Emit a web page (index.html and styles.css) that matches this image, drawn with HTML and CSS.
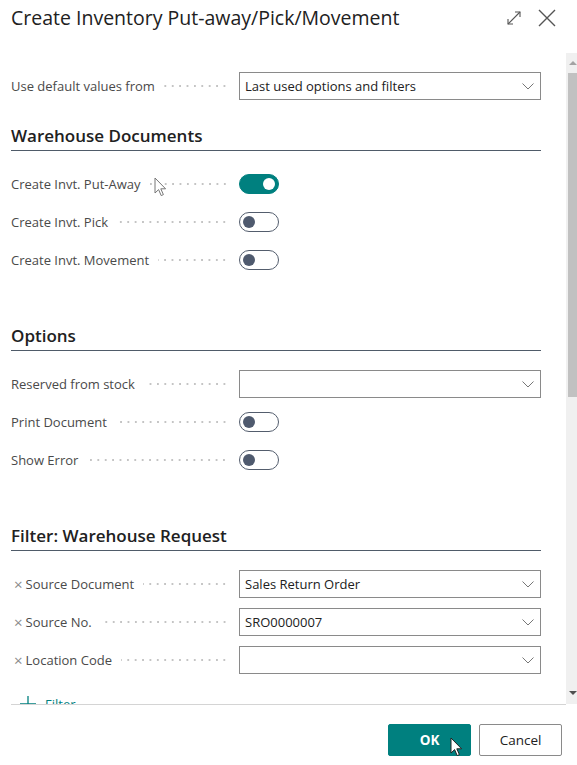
FILE: index.html
```html
<!DOCTYPE html>
<html lang="en">
<head>
    <meta charset="UTF-8">
    <meta name="viewport" content="width=device-width, initial-scale=1.0">
    <title>Create Inventory Put-away/Pick/Movement</title>
    <link rel="stylesheet" href="styles.css">
</head>
<body>
    <div class="dialog">
        <header class="dialog-header">
            <h1 class="dialog-title">Create Inventory Put-away/Pick/Movement</h1>
            <div class="header-actions">
                <button class="icon-btn" aria-label="Expand">
                    <svg width="16" height="16" viewBox="0 0 16 16" fill="none" stroke="#555" stroke-width="1.1">
                        <path d="M2 14 L14 2"/>
                        <path d="M2 9 V14 H7"/>
                        <path d="M9 2 H14 V7"/>
                    </svg>
                </button>
                <button class="icon-btn" aria-label="Close">
                    <svg width="18" height="18" viewBox="0 0 18 18" fill="none" stroke="#555" stroke-width="1.4">
                        <path d="M1 1 L17 17 M17 1 L1 17"/>
                    </svg>
                </button>
            </div>
        </header>

        <div class="dialog-main">
            <div class="dialog-body">
                <div class="field-row">
                    <div class="field-label"><span>Use default values from</span><span class="leader"></span></div>
                    <div class="select"><span>Last used options and filters</span><svg class="chevron" width="12" height="7" viewBox="0 0 12 7"><path d="M0.5 0.5 L6 6 L11.5 0.5" fill="none" stroke="#777" stroke-width="1"/></svg></div>
                </div>

                <section class="group">
                    <h2 class="group-title">Warehouse Documents</h2>
                    <div class="field-row">
                        <div class="field-label"><span>Create Invt. Put-Away</span><span class="leader"></span></div>
                        <div><span class="toggle on"></span></div>
                    </div>
                    <div class="field-row">
                        <div class="field-label"><span>Create Invt. Pick</span><span class="leader"></span></div>
                        <div><span class="toggle"></span></div>
                    </div>
                    <div class="field-row">
                        <div class="field-label"><span>Create Invt. Movement</span><span class="leader"></span></div>
                        <div><span class="toggle"></span></div>
                    </div>
                </section>

                <section class="group">
                    <h2 class="group-title">Options</h2>
                    <div class="field-row">
                        <div class="field-label"><span>Reserved from stock</span><span class="leader"></span></div>
                        <div class="select"><span></span><svg class="chevron" width="12" height="7" viewBox="0 0 12 7"><path d="M0.5 0.5 L6 6 L11.5 0.5" fill="none" stroke="#777" stroke-width="1"/></svg></div>
                    </div>
                    <div class="field-row">
                        <div class="field-label"><span>Print Document</span><span class="leader"></span></div>
                        <div><span class="toggle"></span></div>
                    </div>
                    <div class="field-row">
                        <div class="field-label"><span>Show Error</span><span class="leader"></span></div>
                        <div><span class="toggle"></span></div>
                    </div>
                </section>

                <section class="group">
                    <h2 class="group-title">Filter: Warehouse Request</h2>
                    <div class="field-row">
                        <div class="field-label"><span class="remove">&times;</span><span>Source Document</span><span class="leader"></span></div>
                        <div class="select"><span>Sales Return Order</span><svg class="chevron" width="12" height="7" viewBox="0 0 12 7"><path d="M0.5 0.5 L6 6 L11.5 0.5" fill="none" stroke="#777" stroke-width="1"/></svg></div>
                    </div>
                    <div class="field-row">
                        <div class="field-label"><span class="remove">&times;</span><span>Source No.</span><span class="leader"></span></div>
                        <div class="select"><span>SRO0000007</span><svg class="chevron" width="12" height="7" viewBox="0 0 12 7"><path d="M0.5 0.5 L6 6 L11.5 0.5" fill="none" stroke="#777" stroke-width="1"/></svg></div>
                    </div>
                    <div class="field-row">
                        <div class="field-label"><span class="remove">&times;</span><span>Location Code</span><span class="leader"></span></div>
                        <div class="select"><span></span><svg class="chevron" width="12" height="7" viewBox="0 0 12 7"><path d="M0.5 0.5 L6 6 L11.5 0.5" fill="none" stroke="#777" stroke-width="1"/></svg></div>
                    </div>
                    <a class="add-filter" href="#">
                        <svg width="16" height="16" viewBox="0 0 16 16"><path d="M8 0 V16 M0 8 H16" stroke="#00807f" stroke-width="1.3"/></svg>
                        <span>Filter</span>
                    </a>
                </section>
            </div>

            <div class="scrollbar">
                <div class="scroll-btn up"></div>
                <div class="scroll-track"><div class="scroll-thumb"></div></div>
                <div class="scroll-btn down"></div>
            </div>
        </div>

        <footer class="dialog-footer">
            <button class="btn btn-primary">OK</button>
            <button class="btn">Cancel</button>
        </footer>

        <svg class="cursor cursor-hint" width="13" height="20" viewBox="0 0 13 20">
            <path d="M1 1 V16 L4.6 12.6 L7.2 18.6 L9.4 17.6 L6.8 11.8 L11.6 11.8 Z" fill="#fff" stroke="#777" stroke-width="1"/>
        </svg>
        <svg class="cursor cursor-ok" width="13" height="20" viewBox="0 0 13 20">
            <path d="M1 1 V16 L4.6 12.6 L7.2 18.6 L9.4 17.6 L6.8 11.8 L11.6 11.8 Z" fill="#fff" stroke="#222" stroke-width="1"/>
        </svg>
    </div>
</body>
</html>
```

FILE: styles.css
```css
* {
    box-sizing: border-box;
}
body {
    margin: 0;
    font-family: "Open Sans", "Noto Sans", sans-serif;
    color: #212121;
    background: #fff;
}
.dialog {
    position: relative;
    width: 577px;
    height: 765px;
    display: flex;
    flex-direction: column;
    overflow: hidden;
}
.dialog-header {
    height: 53px;
    flex: none;
    display: flex;
    justify-content: space-between;
    align-items: flex-start;
    padding: 4px 0 0 11px;
}
.dialog-title {
    margin: 0;
    font-size: 19.5px;
    font-weight: 400;
    line-height: 28px;
}
.header-actions {
    display: flex;
    align-items: center;
    gap: 16px;
    padding: 5px 21px 0 0;
}
.icon-btn {
    border: 0;
    background: none;
    padding: 0;
    display: flex;
}

/* scrolling content */
.dialog-main {
    display: flex;
    height: 651px;
    flex: none;
}
.dialog-body {
    flex: 1;
    overflow: hidden;
    padding: 19px 25px 0 11px;
}
.scrollbar {
    width: 11px;
    display: flex;
    flex-direction: column;
    background: #f0f0f0;
}
.scroll-btn {
    height: 20px;
    position: relative;
}
.scroll-btn::after {
    content: "";
    position: absolute;
    left: 3px;
    border-left: 4px solid transparent;
    border-right: 4px solid transparent;
}
.scroll-btn.up::after {
    top: 8px;
    border-bottom: 4px solid #a3a3a3;
}
.scroll-btn.down::after {
    bottom: 9px;
    border-top: 4px solid #505050;
}
.scroll-track {
    flex: 1;
    padding-left: 2px;
}
.scroll-thumb {
    height: 324px;
    background: #c1c1c1;
}

.group {
    display: flex;
    flex-direction: column;
    gap: 10px;
    margin-top: 50px;
}
.dialog-body > .field-row + .group {
    margin-top: 24px;
}
.group-title {
    margin: 0 0 9px;
    font-size: 17px;
    font-weight: 600;
    line-height: 24px;
    padding-bottom: 2px;
    border-bottom: 1px solid #4f5b69;
}
.field-row {
    display: grid;
    grid-template-columns: 217px 1fr;
    column-gap: 11px;
    align-items: center;
    height: 28px;
}
.field-label {
    display: flex;
    align-items: center;
    font-size: 13px;
    color: #4a4a4a;
    white-space: nowrap;
}
.remove {
    color: #8a8a8a;
    font-size: 15px;
    line-height: 1;
    margin: 0 3px 0 3px;
}
.leader {
    flex: 1;
    height: 6px;
    margin-left: 9px;
    background-image: radial-gradient(circle, #c4c4c4 0.9px, transparent 1.1px);
    background-size: 7.4px 6px;
    background-position: right center;
    background-repeat: repeat-x;
}
.select {
    height: 28px;
    border: 1px solid #8a8a8a;
    display: flex;
    align-items: center;
    justify-content: space-between;
    padding: 0 6px 0 5px;
    font-size: 13px;
    color: #212121;
}
.toggle {
    display: block;
    position: relative;
    width: 40px;
    height: 20px;
    border: 1px solid #535d6d;
    border-radius: 10px;
    background: #fff;
}
.toggle::after {
    content: "";
    position: absolute;
    top: 3px;
    left: 3px;
    width: 12px;
    height: 12px;
    border-radius: 50%;
    background: #4f5a6e;
}
.toggle.on {
    background: #00807f;
    border-color: #00807f;
}
.toggle.on::after {
    left: auto;
    right: 3px;
    background: #fff;
}
.add-filter {
    display: flex;
    align-items: center;
    gap: 9px;
    margin: 11px 0 0 9px;
    color: #00807f;
    text-decoration: none;
    font-size: 13px;
}

.dialog-footer {
    flex: none;
    margin-left: 11px;
    width: 555px;
    border-top: 1px solid #d4d4d4;
    display: flex;
    justify-content: flex-end;
    gap: 8px;
    padding: 19px 4px 0 0;
}
.btn {
    width: 83px;
    height: 32px;
    border: 1px solid #8a8a8a;
    border-radius: 2px;
    background: #fff;
    color: #212121;
    font-family: inherit;
    font-size: 13.5px;
}
.btn-primary {
    background: #00807f;
    border-color: #00807f;
    color: #fff;
    font-weight: 700;
}

.cursor {
    position: absolute;
}
.cursor-hint {
    left: 154px;
    top: 177px;
}
.cursor-ok {
    left: 450px;
    top: 737px;
}
```
